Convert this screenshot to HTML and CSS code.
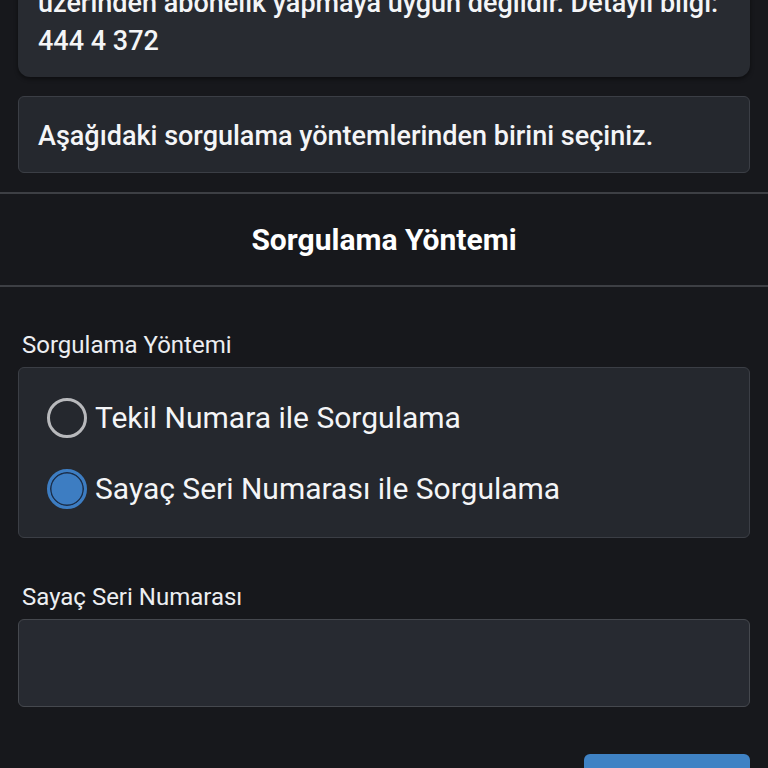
FILE: index.html
```html
<!DOCTYPE html>
<html lang="tr">
<head>
<meta charset="utf-8">
<title>Sorgulama</title>
<link rel="stylesheet" href="styles.css">
</head>
<body>
<div class="page">
  <div class="notice-card">
    <p class="notice-text">üzerinden abonelik yapmaya uygun değildir. Detaylı bilgi:<br>444 4 372</p>
  </div>
  <div class="info-box">
    <p class="info-text">Aşağıdaki sorgulama yöntemlerinden birini seçiniz.</p>
  </div>
  <div class="section-title">
    <h2>Sorgulama Yöntemi</h2>
  </div>
  <div class="form">
    <div class="field">
      <div class="field-label">Sorgulama Yöntemi</div>
      <div class="radio-box">
        <label class="radio-row">
          <span class="radio"></span>
          <span class="radio-text">Tekil Numara ile Sorgulama</span>
        </label>
        <label class="radio-row">
          <span class="radio checked"></span>
          <span class="radio-text">Sayaç Seri Numarası ile Sorgulama</span>
        </label>
      </div>
    </div>
    <div class="field field-serial">
      <div class="field-label">Sayaç Seri Numarası</div>
      <div class="text-input"></div>
    </div>
    <div class="actions">
      <div class="btn"></div>
    </div>
  </div>
</div>
</body>
</html>
```
FILE: styles.css
```css
html, body {
  margin: 0;
  padding: 0;
  background: #17181c;
  height: 100%;
  overflow: hidden;
}
body {
  font-family: Roboto, "Noto Sans", sans-serif;
  color: #f4f5f7;
}
.page {
  display: flex;
  flex-direction: column;
}
.notice-card {
  margin: -32px 18px 0;
  padding: 16px 20px 17px;
  background: #282b31;
  border-radius: 12px;
  box-shadow: 0 2px 4px rgba(0,0,0,0.45);
}
.notice-text {
  margin: 0;
  font-size: 27px;
  line-height: 38px;
  font-weight: 500;
}
.info-box {
  margin: 19px 18px 0;
  height: 75px;
  display: flex;
  align-items: center;
  padding: 0 19px;
  background: #25282e;
  border: 1px solid #3b3e45;
  border-radius: 6px;
}
.info-text {
  margin: 0;
  font-size: 27px;
  font-weight: 500;
  line-height: 32px;
  padding-top: 2px;
}
.section-title {
  margin-top: 19px;
  height: 91px;
  border-top: 2px solid #3d3f44;
  border-bottom: 2px solid #3d3f44;
  display: flex;
  align-items: center;
  justify-content: center;
}
.section-title h2 {
  margin: 0;
  font-size: 30px;
  font-weight: 700;
  line-height: 34px;
  color: #ffffff;
}
.form {
  padding: 0 18px;
  display: flex;
  flex-direction: column;
}
.field {
  display: flex;
  flex-direction: column;
}
.field-label {
  padding-left: 4px;
  margin-top: 43px;
  font-size: 24px;
  line-height: 30px;
  color: #eceef1;
  height: 37px;
}
.field-serial .field-label {
  margin-top: 44px;
}
.radio-box {
  height: 169px;
  border: 1px solid #3b3e45;
  border-radius: 6px;
  background: #25282e;
  display: flex;
  flex-direction: column;
  justify-content: center;
  gap: 31px;
  padding: 2px 28px 0;
  box-sizing: border-box;
  min-height: 171px;
}
.radio-row {
  display: flex;
  align-items: center;
  gap: 8px;
  height: 40px;
}
.radio {
  width: 34px;
  height: 34px;
  border: 3px solid #b8b9bc;
  border-radius: 50%;
  flex: none;
}
.radio.checked {
  border-color: #3d7dc2;
  background: #3d7dc2;
  box-shadow: inset 0 0 0 1.5px #1b2e49;
}
.radio-text {
  font-size: 30px;
  line-height: 36px;
  color: #f4f5f7;
}
.text-input {
  height: 86px;
  border: 1px solid #45484e;
  border-radius: 6px;
  background: #272a31;
}
.actions {
  display: flex;
  justify-content: flex-end;
  margin-top: 47px;
}
.btn {
  width: 166px;
  height: 56px;
  background: #3f82c4;
  border-radius: 6px;
}
```
